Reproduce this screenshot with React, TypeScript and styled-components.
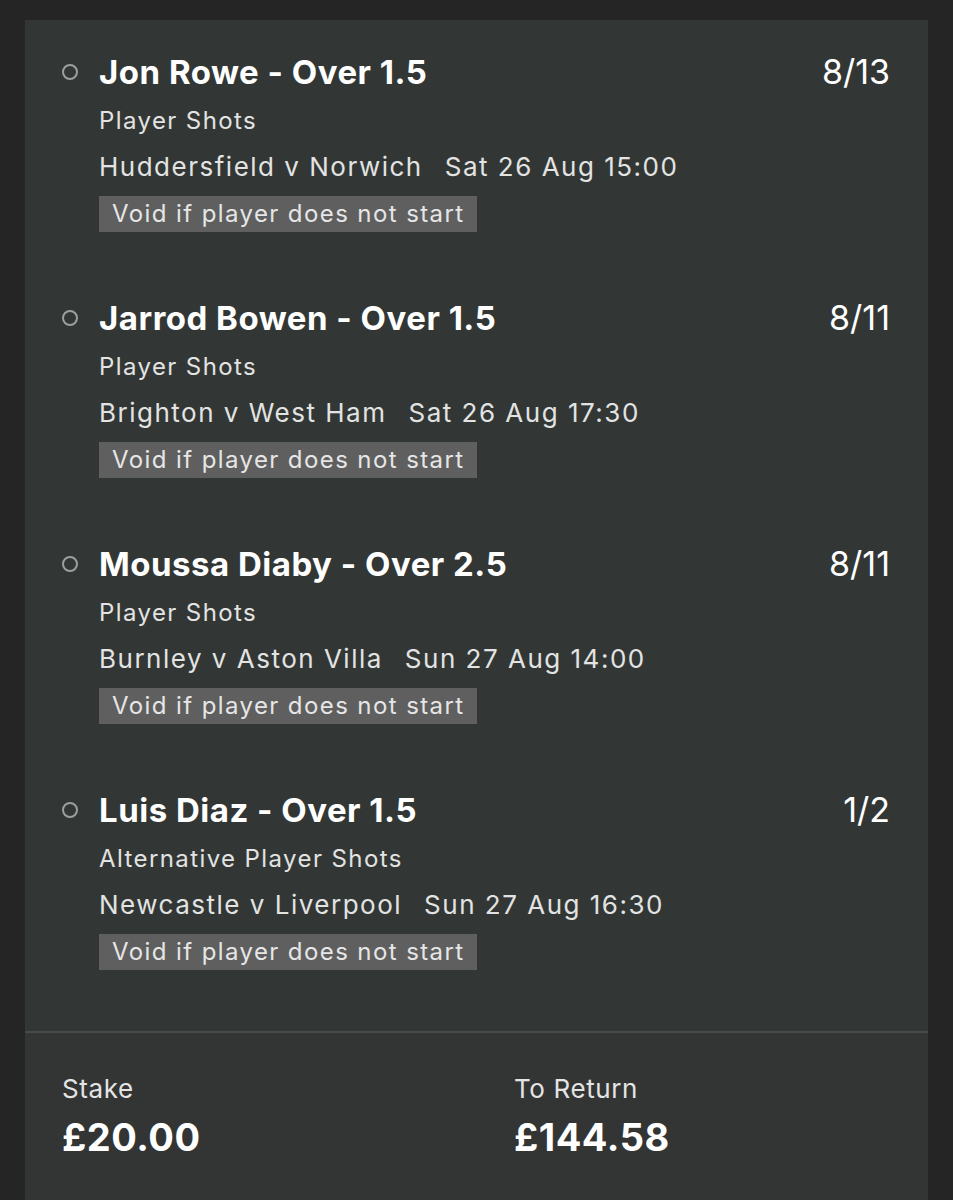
import React from 'react';
import styled, { createGlobalStyle } from 'styled-components';

const GlobalStyle = createGlobalStyle`
  html, body {
    margin: 0;
    padding: 0;
    background: #252525;
  }
  body {
    font-family: Inter, "Noto Sans", "Liberation Sans", sans-serif;
    -webkit-font-smoothing: antialiased;
  }
`;

const Page = styled.div`
  width: 953px;
  height: 1200px;
  padding: 20px 25px 0;
  box-sizing: border-box;
  overflow: hidden;
`;

const Slip = styled.div`
  background: #323735;
  height: 100%;
  display: flex;
  flex-direction: column;
`;

const Legs = styled.div`
  padding: 29px 38px 0 37px;
  display: flex;
  flex-direction: column;
`;

const Leg = styled.div`
  display: flex;
  align-items: flex-start;
  padding-bottom: 63px;

  &:last-child {
    padding-bottom: 61px;
  }
`;

const Bullet = styled.span`
  width: 16px;
  height: 16px;
  box-sizing: border-box;
  border: 2px solid #9d9f9e;
  border-radius: 50%;
  margin-top: 15px;
  margin-right: 21px;
  flex-shrink: 0;
`;

const LegBody = styled.div`
  flex: 1;
  display: flex;
  flex-direction: column;
  align-items: flex-start;
`;

const TitleRow = styled.div`
  display: flex;
  width: 100%;
  justify-content: space-between;
  line-height: 46px;
  color: #fff;
`;

const Selection = styled.div`
  font-size: 33px;
  font-weight: 700;
  letter-spacing: 0.5px;
`;

const Odds = styled.div`
  font-size: 34px;
  font-weight: 400;
`;

const Market = styled.div`
  margin-top: 2px;
  font-size: 24px;
  line-height: 48px;
  color: #e2e3e2;
  letter-spacing: 1.4px;
`;

const Fixture = styled.div`
  font-size: 26px;
  line-height: 44px;
  color: #e2e3e2;
  letter-spacing: 1.5px;
  display: flex;
  gap: 22px;
`;

const VoidTag = styled.div`
  margin-top: 7px;
  height: 36px;
  line-height: 36px;
  padding: 0 12px 0 13px;
  background: #5f5f5f;
  color: #e6e6e6;
  font-size: 24px;
  letter-spacing: 1.4px;
`;

const Divider = styled.div`
  height: 2px;
  background: #484b4a;
`;

const Totals = styled.div`
  display: grid;
  grid-template-columns: 452px 1fr;
  padding: 41px 37px 0;
  background: #333534;
  flex: 1;
`;

const Total = styled.div`
  display: flex;
  flex-direction: column;
  gap: 11px;
`;

const TotalLabel = styled.div`
  font-size: 26px;
  line-height: 30px;
  color: #e4e4e4;
  letter-spacing: 0.6px;
`;

const TotalValue = styled.div`
  font-size: 38px;
  line-height: 44px;
  font-weight: 700;
  color: #fff;
  letter-spacing: 0.5px;
`;

type Selection = {
  name: string;
  odds: string;
  market: string;
  match: string;
  kickoff: string;
};

const legs: Selection[] = [
  { name: 'Jon Rowe - Over 1.5', odds: '8/13', market: 'Player Shots', match: 'Huddersfield v Norwich', kickoff: 'Sat 26 Aug 15:00' },
  { name: 'Jarrod Bowen - Over 1.5', odds: '8/11', market: 'Player Shots', match: 'Brighton v West Ham', kickoff: 'Sat 26 Aug 17:30' },
  { name: 'Moussa Diaby - Over 2.5', odds: '8/11', market: 'Player Shots', match: 'Burnley v Aston Villa', kickoff: 'Sun 27 Aug 14:00' },
  { name: 'Luis Diaz - Over 1.5', odds: '1/2', market: 'Alternative Player Shots', match: 'Newcastle v Liverpool', kickoff: 'Sun 27 Aug 16:30' },
];

const App: React.FC = () => {
  return (
    <>
      <GlobalStyle />
      <Page>
        <Slip>
          <Legs>
            {legs.map((leg) => (
              <Leg key={leg.name}>
                <Bullet />
                <LegBody>
                  <TitleRow>
                    <Selection>{leg.name}</Selection>
                    <Odds>{leg.odds}</Odds>
                  </TitleRow>
                  <Market>{leg.market}</Market>
                  <Fixture>
                    <span>{leg.match}</span>
                    <span>{leg.kickoff}</span>
                  </Fixture>
                  <VoidTag>Void if player does not start</VoidTag>
                </LegBody>
              </Leg>
            ))}
          </Legs>
          <Divider />
          <Totals>
            <Total>
              <TotalLabel>Stake</TotalLabel>
              <TotalValue>£20.00</TotalValue>
            </Total>
            <Total>
              <TotalLabel>To Return</TotalLabel>
              <TotalValue>£144.58</TotalValue>
            </Total>
          </Totals>
        </Slip>
      </Page>
    </>
  );
};

export default App;
